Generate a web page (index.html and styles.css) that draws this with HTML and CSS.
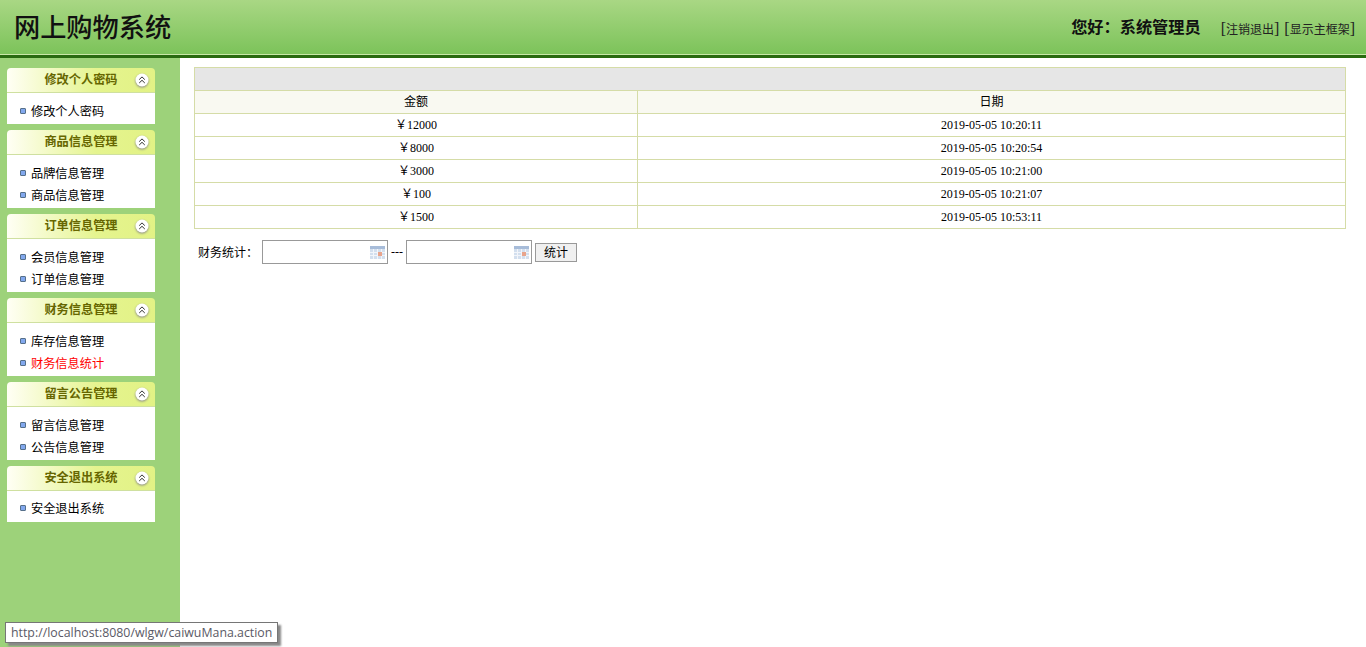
FILE: index.html
```html
<!DOCTYPE html>
<html>
<head>
    <title>网上购物系统</title>
    <meta charset="utf-8">
    <link rel="stylesheet" href="styles.css">
</head>
<body>
    <!-- Top banner -->
    <div class="top">
        <h1 class="logo">网上购物系统</h1>
        <div class="top-right">
            <b class="hello">您好：系统管理员</b>
            <a class="top-link"><span class="br">[</span>注销退出<span class="br">]</span></a>
            <a class="top-link"><span class="br">[</span>显示主框架<span class="br">]</span></a>
        </div>
    </div>

    <div class="main">
        <!-- Left menu -->
        <div class="side">
            <div class="box">
                <div class="box-head"><span>修改个人密码</span><svg class="fold" viewBox="0 0 16 16"><circle cx="8" cy="8" r="6.5"/><path d="M5.2 7.6 8 4.9l2.8 2.7M5.2 11 8 8.3l2.8 2.7"/></svg></div>
                <ul class="box-body"><li>修改个人密码</li></ul>
            </div>
            <div class="box">
                <div class="box-head"><span>商品信息管理</span><svg class="fold" viewBox="0 0 16 16"><circle cx="8" cy="8" r="6.5"/><path d="M5.2 7.6 8 4.9l2.8 2.7M5.2 11 8 8.3l2.8 2.7"/></svg></div>
                <ul class="box-body"><li>品牌信息管理</li><li>商品信息管理</li></ul>
            </div>
            <div class="box">
                <div class="box-head"><span>订单信息管理</span><svg class="fold" viewBox="0 0 16 16"><circle cx="8" cy="8" r="6.5"/><path d="M5.2 7.6 8 4.9l2.8 2.7M5.2 11 8 8.3l2.8 2.7"/></svg></div>
                <ul class="box-body"><li>会员信息管理</li><li>订单信息管理</li></ul>
            </div>
            <div class="box">
                <div class="box-head"><span>财务信息管理</span><svg class="fold" viewBox="0 0 16 16"><circle cx="8" cy="8" r="6.5"/><path d="M5.2 7.6 8 4.9l2.8 2.7M5.2 11 8 8.3l2.8 2.7"/></svg></div>
                <ul class="box-body"><li>库存信息管理</li><li class="on">财务信息统计</li></ul>
            </div>
            <div class="box">
                <div class="box-head"><span>留言公告管理</span><svg class="fold" viewBox="0 0 16 16"><circle cx="8" cy="8" r="6.5"/><path d="M5.2 7.6 8 4.9l2.8 2.7M5.2 11 8 8.3l2.8 2.7"/></svg></div>
                <ul class="box-body"><li>留言信息管理</li><li>公告信息管理</li></ul>
            </div>
            <div class="box">
                <div class="box-head"><span>安全退出系统</span><svg class="fold" viewBox="0 0 16 16"><circle cx="8" cy="8" r="6.5"/><path d="M5.2 7.6 8 4.9l2.8 2.7M5.2 11 8 8.3l2.8 2.7"/></svg></div>
                <ul class="box-body last"><li>安全退出系统</li></ul>
            </div>
        </div>

        <!-- Finance table -->
        <div class="content">
            <table class="list">
                <colgroup><col class="col-money"><col></colgroup>
                <tr class="title"><td colspan="2"></td></tr>
                <tr class="head"><td>金额</td><td>日期</td></tr>
                <tr><td>￥12000</td><td>2019-05-05 10:20:11</td></tr>
                <tr><td>￥8000</td><td>2019-05-05 10:20:54</td></tr>
                <tr><td>￥3000</td><td>2019-05-05 10:21:00</td></tr>
                <tr><td>￥100</td><td>2019-05-05 10:21:07</td></tr>
                <tr><td>￥1500</td><td>2019-05-05 10:53:11</td></tr>
            </table>
            <form class="search">
                <span class="search-label">财务统计：</span>
                <span class="date-box"><svg class="cal" viewBox="0 0 15 13"><rect width="15" height="13" fill="#d3dfee"/><rect width="15" height="3" fill="#a7bcd9"/><path d="M0 6.5h15M0 9.5h15M3.5 3v10M7.5 3v10M11.5 3v10" stroke="#f2f5fa"/><rect x="8" y="6" width="4" height="4" fill="#e8a48c"/></svg></span>
                <span class="dash">---</span>
                <span class="date-box"><svg class="cal" viewBox="0 0 15 13"><rect width="15" height="13" fill="#d3dfee"/><rect width="15" height="3" fill="#a7bcd9"/><path d="M0 6.5h15M0 9.5h15M3.5 3v10M7.5 3v10M11.5 3v10" stroke="#f2f5fa"/><rect x="8" y="6" width="4" height="4" fill="#e8a48c"/></svg></span>
                <button class="btn" type="button">统计</button>
            </form>
        </div>
    </div>

    <!-- Browser link status -->
    <div class="status">http://localhost:8080/wlgw/caiwuMana.action</div>
</body>
</html>
```

FILE: styles.css
```css
html, body { margin: 0; padding: 0; height: 100%; overflow: hidden; }
body { font-family: "Liberation Serif", "Noto Sans CJK SC", serif; font-size: 12px; color: #000; background: #fff; display: flex; flex-direction: column; }

.top { height: 54px; flex: none; display: flex; align-items: center; justify-content: space-between; padding: 0 11px 0 14px; background: linear-gradient(#a9d784, #7cc35a); border-bottom: 1px solid #c9e8a8; }
.logo { margin: 0 0 2px; font-size: 26.2px; font-weight: 500; font-family: "Noto Sans CJK SC", sans-serif; line-height: 52px; color: #111; }
.top-right { display: flex; align-items: center; }
.hello { font-size: 16.2px; font-weight: 700; font-family: "Noto Sans CJK SC", sans-serif; margin: 0 20px 2px 0; color: #111; }
.top-link { font-size: 12px; font-family: "Noto Sans CJK SC", sans-serif; margin: 3px 0 0 5px; color: #222; }
.top-link:first-of-type { margin-left: 0; }
.br { font-family: "Liberation Serif", serif; font-size: 16px; }

.main { flex: 1; display: flex; border-top: 3px solid #296b10; min-height: 0; }

.side { width: 180px; flex: none; background: #9dd27a; padding: 10px 0 0 7px; box-sizing: border-box; }
.box { width: 148px; margin-bottom: 6px; }
.box-head { height: 22px; padding-bottom: 2px; display: flex; align-items: center; justify-content: center; position: relative; background: linear-gradient(90deg, #fffff5, #e5f48f 60%, #e2f285); border-bottom: 1px solid #cfe0a0; border-radius: 4px 4px 0 0; }
.box-head span { font-family: "Noto Sans CJK SC", sans-serif; font-weight: 700; font-size: 12.2px; color: #666600; }
.fold { position: absolute; right: 5px; top: 4px; width: 16px; height: 16px; filter: drop-shadow(0 1px 1px #888); }
.fold circle { fill: #fff; }
.fold path { fill: none; stroke: #333; stroke-width: 1; }
.box-body { list-style: none; margin: 0; padding: 7px 0 2px; background: #fff; }
.box-body.last { padding: 6px 0 3px; }
.box-body li { height: 22px; line-height: 22px; padding-left: 24px; position: relative; font-family: "Noto Sans CJK SC", sans-serif; font-size: 12.2px; }
.box-body li::before { content: ""; position: absolute; left: 13px; top: 8px; width: 4px; height: 4px; background: #82a8ee; border: 1px solid #56708a; border-radius: 1px; }
.box-body li.on { color: #f00; }

.content { flex: 1; padding: 9px 20px 0 14px; min-width: 0; }
.list { width: 100%; border-collapse: collapse; table-layout: fixed; }
.list td { height: 22px; padding: 0; border: 1px solid #d5dca7; text-align: center; font-size: 12px; line-height: 22px; vertical-align: top; }
.list .title td { background: #e6e6e6; }
.list .head td { background: #f9f9f1; }
.col-money { width: 443px; }

.search { display: flex; align-items: center; margin-top: 11px; padding-left: 4px; }
.search-label { font-family: "Noto Sans CJK SC", sans-serif; width: 64px; margin-bottom: 2px; }
.date-box { width: 122px; height: 22px; border: 1px solid #999; display: flex; align-items: center; justify-content: flex-end; padding-right: 2px; }
.cal { width: 15px; height: 13px; }
.dash { margin: 0 3px; }
.btn { width: 42px; height: 19px; padding: 0 0 2px; margin: 0 0 0 3px; border: 1px solid #999; background: #f0f0f0; font-family: "Noto Sans CJK SC", sans-serif; font-size: 12px; line-height: 15px; }

.status { position: absolute; left: 5px; top: 622px; height: 19px; line-height: 19px; padding: 0 5px; border: 1px solid #767676; background: #fff; color: #5a5a66; font-family: "Open Sans", "Liberation Sans", sans-serif; font-size: 12.35px; box-shadow: 3px 3px 2px #888; white-space: nowrap; }
```
